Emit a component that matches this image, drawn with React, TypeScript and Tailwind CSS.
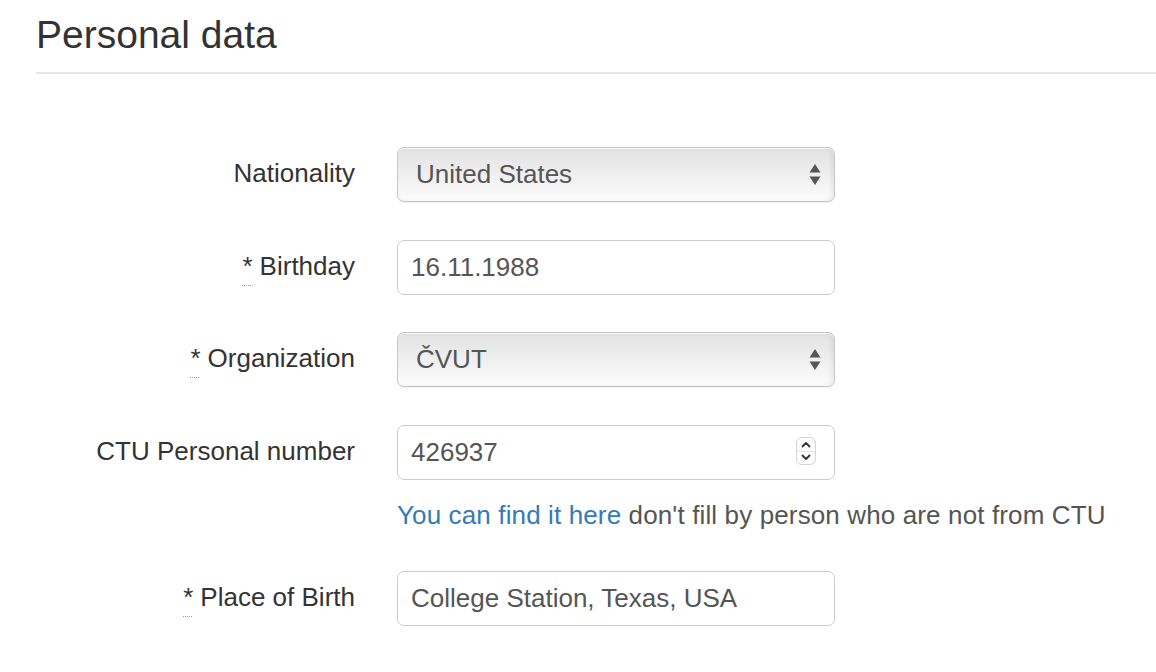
import React from 'react';

const font = { fontFamily: '"Liberation Sans", Arial, sans-serif' };

const Req: React.FC = () => (
  <span className="underline decoration-dotted decoration-[#999] underline-offset-[10px] decoration-[1px] mr-[7px]">*</span>
);

const Label: React.FC<{ req?: boolean; children: React.ReactNode }> = ({ req, children }) => (
  <div className="w-[319px] shrink-0 text-right text-[26px] leading-none text-[#333] -mt-[3px]">
    {req && <Req />}
    {children}
  </div>
);

const SelectBox: React.FC<{ value: string }> = ({ value }) => (
  <div className="relative w-[438px] h-[55px] rounded-[7px] border border-[#c6c6c6] bg-gradient-to-b from-[#e2e2e2] via-[#efefef] to-[#fcfcfc] shadow-[inset_0_1px_0_rgba(255,255,255,0.8),inset_-3px_0_4px_rgba(0,0,0,0.06),0_1px_1px_rgba(0,0,0,0.06)] flex items-center pl-[18px] text-[26px] text-[#555]">
    {value}
    <svg className="absolute right-[13px] top-[15px]" width="12" height="23" viewBox="0 0 12 23">
      <path d="M6 1 L11.5 9.5 H0.5 Z" fill="#555" />
      <path d="M6 22 L11.5 13.5 H0.5 Z" fill="#555" />
    </svg>
  </div>
);

const TextBox: React.FC<{ value: string; spinner?: boolean }> = ({ value, spinner }) => (
  <div className="relative w-[438px] h-[55px] rounded-[7px] border border-[#cccccc] bg-white flex items-center pl-[13px] text-[26px] text-[#555]">
    {value}
    {spinner && (
      <div className="absolute right-[18px] top-[11px] w-[20px] h-[28px] rounded-[6px] border border-[#d4d4d4] bg-white flex flex-col">
        <div className="flex-1 flex items-center justify-center border-b border-[#e4e4e4]">
          <svg width="10" height="7" viewBox="0 0 10 7">
            <path d="M1.5 5.5 L5 2 L8.5 5.5" fill="none" stroke="#333" strokeWidth="1.8" strokeLinecap="round" strokeLinejoin="round" />
          </svg>
        </div>
        <div className="flex-1 flex items-center justify-center">
          <svg width="10" height="7" viewBox="0 0 10 7">
            <path d="M1.5 1.5 L5 5 L8.5 1.5" fill="none" stroke="#333" strokeWidth="1.8" strokeLinecap="round" strokeLinejoin="round" />
          </svg>
        </div>
      </div>
    )}
  </div>
);

const Row: React.FC<{ label: React.ReactNode; children: React.ReactNode; className?: string }> = ({ label, children, className }) => (
  <div className={`flex items-center gap-[42px] ${className ?? ''}`}>
    {label}
    {children}
  </div>
);

export default function App() {
  return (
    <div className="w-[1156px] h-[672px] bg-white overflow-hidden pl-[36px]" style={font}>
      <h1 className="pt-[13px] text-[39px] leading-[43px] text-[#333] font-normal">Personal data</h1>
      <div className="mt-[16px] h-[2px] bg-[#e6e6e6]" />

      <div className="mt-[73px] flex flex-col">
        <Row label={<Label>Nationality</Label>}>
          <SelectBox value="United States" />
        </Row>
        <Row className="mt-[38px]" label={<Label req>Birthday</Label>}>
          <TextBox value="16.11.1988" />
        </Row>
        <Row className="mt-[37px]" label={<Label req>Organization</Label>}>
          <SelectBox value="ČVUT" />
        </Row>
        <Row className="mt-[38px]" label={<Label>CTU Personal number</Label>}>
          <TextBox value="426937" spinner />
        </Row>
        <div className="ml-[361px] mt-[17px] text-[26px] leading-[37px] tracking-[0.13px] text-[#555] whitespace-nowrap">
          <span className="text-[#337ab7]">You can find it here</span> don't fill by person who are not from CTU
        </div>
        <Row className="mt-[37px]" label={<Label req>Place of Birth</Label>}>
          <TextBox value="College Station, Texas, USA" />
        </Row>
      </div>
    </div>
  );
}
